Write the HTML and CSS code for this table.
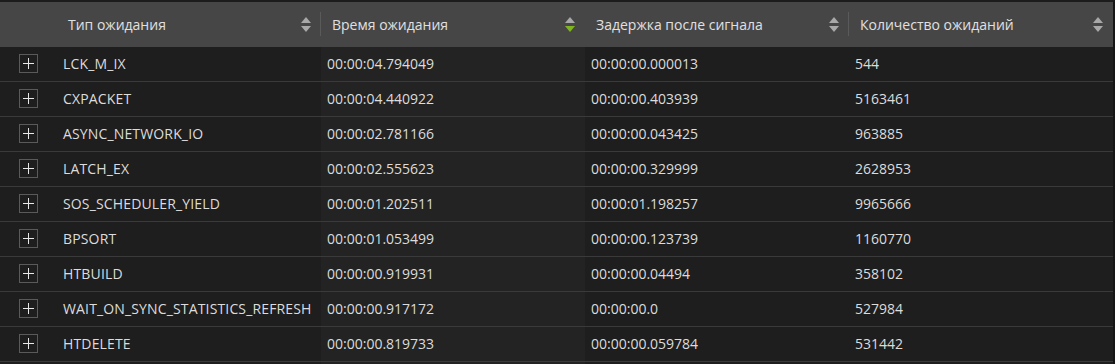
FILE: index.html
```html
<!DOCTYPE html>
<html lang="ru">
<head>
<meta charset="utf-8">
<title>Wait stats</title>
<link rel="stylesheet" href="styles.css">
</head>
<body>
<div class="grid">
  <div class="row head">
    <div class="hcell exp"></div>
    <div class="hcell sep"><span>Тип ожидания</span><span class="sort"><i class="up"></i><i class="dn"></i></span></div>
    <div class="hcell"><span>Время ожидания</span><span class="sort"><i class="up"></i><i class="dn active"></i></span></div>
    <div class="hcell sep"><span>Задержка после сигнала</span><span class="sort"><i class="up"></i><i class="dn"></i></span></div>
    <div class="hcell"><span>Количество ожиданий</span><span class="sort"><i class="up"></i><i class="dn"></i></span></div>
  </div>
  <div class="row"><div class="cell exp"><span class="plus"></span></div><div class="cell name">LCK_M_IX</div><div class="cell sorted">00:00:04.794049</div><div class="cell">00:00:00.000013</div><div class="cell">544</div></div>
  <div class="row"><div class="cell exp"><span class="plus"></span></div><div class="cell name">CXPACKET</div><div class="cell sorted">00:00:04.440922</div><div class="cell">00:00:00.403939</div><div class="cell">5163461</div></div>
  <div class="row"><div class="cell exp"><span class="plus"></span></div><div class="cell name">ASYNC_NETWORK_IO</div><div class="cell sorted">00:00:02.781166</div><div class="cell">00:00:00.043425</div><div class="cell">963885</div></div>
  <div class="row"><div class="cell exp"><span class="plus"></span></div><div class="cell name">LATCH_EX</div><div class="cell sorted">00:00:02.555623</div><div class="cell">00:00:00.329999</div><div class="cell">2628953</div></div>
  <div class="row"><div class="cell exp"><span class="plus"></span></div><div class="cell name">SOS_SCHEDULER_YIELD</div><div class="cell sorted">00:00:01.202511</div><div class="cell">00:00:01.198257</div><div class="cell">9965666</div></div>
  <div class="row"><div class="cell exp"><span class="plus"></span></div><div class="cell name">BPSORT</div><div class="cell sorted">00:00:01.053499</div><div class="cell">00:00:00.123739</div><div class="cell">1160770</div></div>
  <div class="row"><div class="cell exp"><span class="plus"></span></div><div class="cell name">HTBUILD</div><div class="cell sorted">00:00:00.919931</div><div class="cell">00:00:00.04494</div><div class="cell">358102</div></div>
  <div class="row"><div class="cell exp"><span class="plus"></span></div><div class="cell name">WAIT_ON_SYNC_STATISTICS_REFRESH</div><div class="cell sorted">00:00:00.917172</div><div class="cell">00:00:00.0</div><div class="cell">527984</div></div>
  <div class="row"><div class="cell exp"><span class="plus"></span></div><div class="cell name">HTDELETE</div><div class="cell sorted">00:00:00.819733</div><div class="cell">00:00:00.059784</div><div class="cell">531442</div></div>
  <div class="row empty"><div class="cell exp"></div><div class="cell name"></div><div class="cell sorted"></div><div class="cell"></div><div class="cell"></div></div>
</div>
</body>
</html>
```
FILE: styles.css
```css
html, body {
  margin: 0;
  padding: 0;
  background: #1e1e1e;
  overflow: hidden;
}
body {
  font-family: "Open Sans", "Noto Sans", sans-serif;
  font-size: 14px;
  color: #dcdcdc;
}
.grid {
  border-top: 2px solid #1c1c1c;
  border-right: 2px solid #151515;
  height: 362px;
  overflow: hidden;
}
.row {
  display: grid;
  grid-template-columns: 57px 264px 264px 264px 264px;
  height: 34px;
  border-bottom: 1px solid #3a3a3a;
}
.row.head {
  height: 45px;
  background: #464646;
  border-bottom: none;
}
.hcell {
  display: flex;
  align-items: center;
  justify-content: space-between;
  padding: 0 10px 0 11px;
  position: relative;
  color: #e0e0e0;
}
.hcell.exp { padding: 0; }
.hcell.sep::after {
  content: "";
  position: absolute;
  right: 0;
  top: 10px;
  bottom: 11px;
  width: 1px;
  background: #5a5a5a;
}
.sort {
  display: flex;
  flex-direction: column;
  gap: 3px;
  width: 11px;
  align-items: center;
}
.sort i {
  display: block;
  width: 0;
  height: 0;
  border-left: 5.5px solid transparent;
  border-right: 5.5px solid transparent;
}
.sort .up { border-bottom: 6px solid #a8a8a8; }
.sort .dn { border-top: 6px solid #a8a8a8; }
.sort .dn.active { border-top-color: #7fb51e; }
.cell {
  display: flex;
  align-items: center;
  padding-left: 6px;
  padding-bottom: 1px;
  white-space: nowrap;
  overflow: hidden;
}
.cell.name { letter-spacing: 0.15px; }
.cell.sorted { background: #232323; }
.cell.exp {
  padding-left: 19px;
}
.plus {
  display: block;
  width: 17px;
  height: 17px;
  border: 1px solid #5a5a5a;
  position: relative;
}
.plus::before, .plus::after {
  content: "";
  position: absolute;
  background: #e8e8e8;
}
.plus::before {
  left: 3px;
  right: 3px;
  top: 8px;
  height: 1px;
}
.plus::after {
  top: 3px;
  bottom: 3px;
  left: 8px;
  width: 1px;
}
```
